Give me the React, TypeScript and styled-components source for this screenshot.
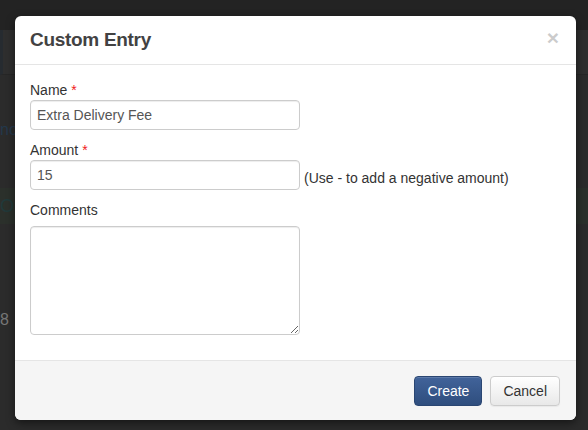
import React from "react";
import styled, { createGlobalStyle } from "styled-components";

const GlobalStyle = createGlobalStyle`
  html, body {
    margin: 0;
    padding: 0;
    background: #2b2b2b;
  }
  body {
    font-family: "Liberation Sans", Arial, sans-serif;
  }
`;

const Screen = styled.div`
  position: relative;
  width: 588px;
  height: 430px;
  overflow: hidden;
  background: #2b2b2b;
`;

// page behind the backdrop (dimmed)
const TopBar = styled.div`
  height: 30px;
  background: #232323;
`;

const NavBar = styled.div`
  height: 44px;
  background: #2e2e2e;
  border-left: 3px solid #262b30;
  border-bottom: 1px solid #262626;
`;

const PageText = styled.div<{ $top: number; $color: string }>`
  margin-top: ${(p) => p.$top}px;
  height: 20px;
  line-height: 20px;
  font-size: 16px;
  color: ${(p) => p.$color};
`;

const GreenRow = styled.div`
  margin-top: 48px;
  height: 36px;
  background: #2b302b;
  display: flex;
  align-items: center;
  font-size: 18px;
  color: #20393a;
`;

const Modal = styled.div`
  position: absolute;
  left: 15px;
  top: 16px;
  width: 561px;
  height: 404px;
  background: #fff;
  border-radius: 6px;
  box-shadow: 0 3px 9px rgba(0, 0, 0, 0.5);
  display: flex;
  flex-direction: column;
  overflow: hidden;
`;

const Header = styled.div`
  height: 48px;
  flex: none;
  padding: 0 15px;
  border-bottom: 1px solid #e5e5e5;
  display: flex;
  align-items: center;
  justify-content: space-between;
`;

const Title = styled.h4`
  margin: 0;
  font-size: 19px;
  letter-spacing: -0.3px;
  line-height: 24px;
  font-weight: bold;
  color: #424242;
`;

const Close = styled.button`
  border: 0;
  background: none;
  padding: 0;
  margin: 0 2px 6px 0;
  font-family: "Liberation Sans", Arial, sans-serif;
  font-size: 21px;
  font-weight: bold;
  line-height: 1;
  color: #000;
  opacity: 0.2;
  cursor: pointer;
`;

const Body = styled.div`
  flex: 1;
  padding: 15px;
`;

const Group = styled.div`
  margin-bottom: 10px;
`;

const Label = styled.label<{ $gap?: number }>`
  display: block;
  font-size: 14px;
  line-height: 20px;
  color: #333;
  margin-bottom: ${(p) => p.$gap ?? 0}px;
`;

const Req = styled.span`
  color: #f01a1a;
  margin-left: 4px;
`;

const Row = styled.div`
  display: flex;
  align-items: center;
`;

const Input = styled.input`
  box-sizing: border-box;
  width: 270px;
  height: 30px;
  padding: 4px 6px;
  border: 1px solid #ccc;
  border-radius: 4px;
  box-shadow: inset 0 1px 1px rgba(0, 0, 0, 0.075);
  font-family: "Liberation Sans", Arial, sans-serif;
  font-size: 14px;
  color: #555;
  outline: none;
`;

const Help = styled.span`
  margin-left: 4px;
  margin-top: 6px;
  font-size: 14px;
  color: #333;
`;

const TextArea = styled.textarea`
  display: block;
  box-sizing: border-box;
  width: 270px;
  height: 109px;
  padding: 6px;
  border: 1px solid #ccc;
  border-radius: 4px;
  box-shadow: inset 0 1px 1px rgba(0, 0, 0, 0.075);
  font-family: "Liberation Sans", Arial, sans-serif;
  font-size: 14px;
  color: #555;
  outline: none;
`;

const Footer = styled.div`
  height: 59px;
  flex: none;
  padding: 0 16px 0 15px;
  background: #f5f5f5;
  border-top: 1px solid #e5e5e5;
  display: flex;
  align-items: center;
  justify-content: flex-end;
  gap: 8px;
`;

const Button = styled.button<{ $primary?: boolean }>`
  box-sizing: border-box;
  height: 30px;
  padding: 0 12px;
  border-radius: 4px;
  font-family: "Liberation Sans", Arial, sans-serif;
  font-size: 14px;
  cursor: pointer;
  border: 1px solid ${(p) => (p.$primary ? "#2a4672" : "#ccc")};
  color: ${(p) => (p.$primary ? "#fff" : "#333")};
  background: ${(p) =>
    p.$primary
      ? "linear-gradient(#41639a, #2f4e7e)"
      : "linear-gradient(#ffffff, #e8e8e8)"};
  box-shadow: ${(p) =>
    p.$primary
      ? "inset 0 1px 0 rgba(255,255,255,0.15)"
      : "inset 0 1px 0 rgba(255,255,255,0.8), 0 1px 1px rgba(0,0,0,0.05)"};
`;

export default function App() {
  return (
    <>
      <GlobalStyle />
      <Screen>
        <TopBar />
        <NavBar />
        <PageText $top={45} $color="#23384b">
          now
        </PageText>
        <GreenRow>Or</GreenRow>
        <PageText $top={86} $color="#777">
          8
        </PageText>

        <Modal>
          <Header>
            <Title>Custom Entry</Title>
            <Close aria-label="Close">×</Close>
          </Header>
          <Body>
            <Group>
              <Label>
                Name<Req>*</Req>
              </Label>
              <Input defaultValue="Extra Delivery Fee" />
            </Group>
            <Group>
              <Label>
                Amount<Req>*</Req>
              </Label>
              <Row>
                <Input defaultValue="15" />
                <Help>(Use - to add a negative amount)</Help>
              </Row>
            </Group>
            <Group>
              <Label $gap={6}>Comments</Label>
              <TextArea />
            </Group>
          </Body>
          <Footer>
            <Button $primary>Create</Button>
            <Button>Cancel</Button>
          </Footer>
        </Modal>
      </Screen>
    </>
  );
}
